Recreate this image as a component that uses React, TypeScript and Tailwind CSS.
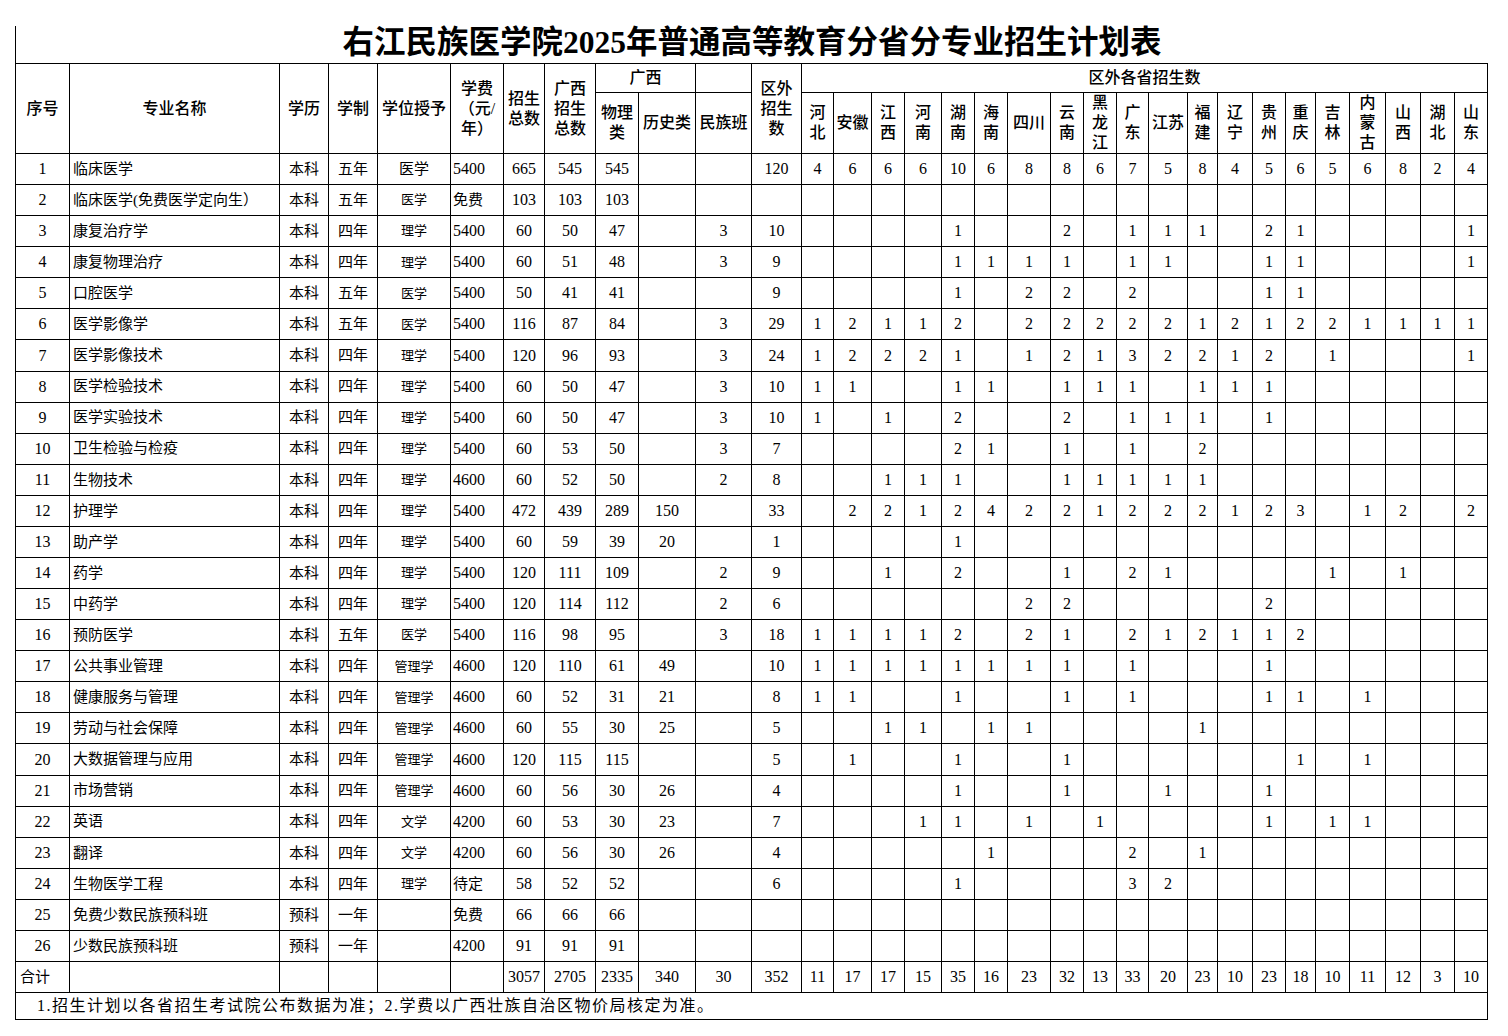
import React from "react";

const provinces = ["河北", "安徽", "江西", "河南", "湖南", "海南", "四川", "云南", "黑龙江", "广东", "江苏", "福建", "辽宁", "贵州", "重庆", "吉林", "内蒙古", "山西", "湖北", "山东"];

// header labels, stacked the way they wrap in the sheet
const provinceHead = [["河", "北"], ["安徽"], ["江", "西"], ["河", "南"], ["湖", "南"], ["海", "南"], ["四川"], ["云", "南"], ["黑", "龙", "江"], ["广", "东"], ["江苏"], ["福", "建"], ["辽", "宁"], ["贵", "州"], ["重", "庆"], ["吉", "林"], ["内", "蒙", "古"], ["山", "西"], ["湖", "北"], ["山", "东"]];

const provinceCols = ["w-[32px]", "w-[38px]", "w-[33px]", "w-[37px]", "w-[33px]", "w-[33px]", "w-[43px]", "w-[33px]", "w-[33px]", "w-[32px]", "w-[39px]", "w-[30px]", "w-[35px]", "w-[33px]", "w-[30px]", "w-[34px]", "w-[36px]", "w-[35px]", "w-[34px]", "w-[33px]"];

type Prov = Partial<Record<string, number>>;
// no, name, level, years, degree, fee, total, gx total, physics, history, minzu, outside, provinces
type Row = [string, string, string, string, string, string, string, string, string, string, string, string, Prov];

const rows: Row[] = [
    ["1", "临床医学", "本科", "五年", "医学", "5400", "665", "545", "545", "", "", "120", { 河北: 4, 安徽: 6, 江西: 6, 河南: 6, 湖南: 10, 海南: 6, 四川: 8, 云南: 8, 黑龙江: 6, 广东: 7, 江苏: 5, 福建: 8, 辽宁: 4, 贵州: 5, 重庆: 6, 吉林: 5, 内蒙古: 6, 山西: 8, 湖北: 2, 山东: 4 }],
    ["2", "临床医学(免费医学定向生）", "本科", "五年", "医学", "免费", "103", "103", "103", "", "", "", {}],
    ["3", "康复治疗学", "本科", "四年", "理学", "5400", "60", "50", "47", "", "3", "10", { 湖南: 1, 云南: 2, 广东: 1, 江苏: 1, 福建: 1, 贵州: 2, 重庆: 1, 山东: 1 }],
    ["4", "康复物理治疗", "本科", "四年", "理学", "5400", "60", "51", "48", "", "3", "9", { 湖南: 1, 海南: 1, 四川: 1, 云南: 1, 广东: 1, 江苏: 1, 贵州: 1, 重庆: 1, 山东: 1 }],
    ["5", "口腔医学", "本科", "五年", "医学", "5400", "50", "41", "41", "", "", "9", { 湖南: 1, 四川: 2, 云南: 2, 广东: 2, 贵州: 1, 重庆: 1 }],
    ["6", "医学影像学", "本科", "五年", "医学", "5400", "116", "87", "84", "", "3", "29", { 河北: 1, 安徽: 2, 江西: 1, 河南: 1, 湖南: 2, 四川: 2, 云南: 2, 黑龙江: 2, 广东: 2, 江苏: 2, 福建: 1, 辽宁: 2, 贵州: 1, 重庆: 2, 吉林: 2, 内蒙古: 1, 山西: 1, 湖北: 1, 山东: 1 }],
    ["7", "医学影像技术", "本科", "四年", "理学", "5400", "120", "96", "93", "", "3", "24", { 河北: 1, 安徽: 2, 江西: 2, 河南: 2, 湖南: 1, 四川: 1, 云南: 2, 黑龙江: 1, 广东: 3, 江苏: 2, 福建: 2, 辽宁: 1, 贵州: 2, 吉林: 1, 山东: 1 }],
    ["8", "医学检验技术", "本科", "四年", "理学", "5400", "60", "50", "47", "", "3", "10", { 河北: 1, 安徽: 1, 湖南: 1, 海南: 1, 云南: 1, 黑龙江: 1, 广东: 1, 福建: 1, 辽宁: 1, 贵州: 1 }],
    ["9", "医学实验技术", "本科", "四年", "理学", "5400", "60", "50", "47", "", "3", "10", { 河北: 1, 江西: 1, 湖南: 2, 云南: 2, 广东: 1, 江苏: 1, 福建: 1, 贵州: 1 }],
    ["10", "卫生检验与检疫", "本科", "四年", "理学", "5400", "60", "53", "50", "", "3", "7", { 湖南: 2, 海南: 1, 云南: 1, 广东: 1, 福建: 2 }],
    ["11", "生物技术", "本科", "四年", "理学", "4600", "60", "52", "50", "", "2", "8", { 江西: 1, 河南: 1, 湖南: 1, 云南: 1, 黑龙江: 1, 广东: 1, 江苏: 1, 福建: 1 }],
    ["12", "护理学", "本科", "四年", "理学", "5400", "472", "439", "289", "150", "", "33", { 安徽: 2, 江西: 2, 河南: 1, 湖南: 2, 海南: 4, 四川: 2, 云南: 2, 黑龙江: 1, 广东: 2, 江苏: 2, 福建: 2, 辽宁: 1, 贵州: 2, 重庆: 3, 内蒙古: 1, 山西: 2, 山东: 2 }],
    ["13", "助产学", "本科", "四年", "理学", "5400", "60", "59", "39", "20", "", "1", { 湖南: 1 }],
    ["14", "药学", "本科", "四年", "理学", "5400", "120", "111", "109", "", "2", "9", { 江西: 1, 湖南: 2, 云南: 1, 广东: 2, 江苏: 1, 吉林: 1, 山西: 1 }],
    ["15", "中药学", "本科", "四年", "理学", "5400", "120", "114", "112", "", "2", "6", { 四川: 2, 云南: 2, 贵州: 2 }],
    ["16", "预防医学", "本科", "五年", "医学", "5400", "116", "98", "95", "", "3", "18", { 河北: 1, 安徽: 1, 江西: 1, 河南: 1, 湖南: 2, 四川: 2, 云南: 1, 广东: 2, 江苏: 1, 福建: 2, 辽宁: 1, 贵州: 1, 重庆: 2 }],
    ["17", "公共事业管理", "本科", "四年", "管理学", "4600", "120", "110", "61", "49", "", "10", { 河北: 1, 安徽: 1, 江西: 1, 河南: 1, 湖南: 1, 海南: 1, 四川: 1, 云南: 1, 广东: 1, 贵州: 1 }],
    ["18", "健康服务与管理", "本科", "四年", "管理学", "4600", "60", "52", "31", "21", "", "8", { 河北: 1, 安徽: 1, 湖南: 1, 云南: 1, 广东: 1, 贵州: 1, 重庆: 1, 内蒙古: 1 }],
    ["19", "劳动与社会保障", "本科", "四年", "管理学", "4600", "60", "55", "30", "25", "", "5", { 江西: 1, 河南: 1, 海南: 1, 四川: 1, 福建: 1 }],
    ["20", "大数据管理与应用", "本科", "四年", "管理学", "4600", "120", "115", "115", "", "", "5", { 安徽: 1, 湖南: 1, 云南: 1, 重庆: 1, 内蒙古: 1 }],
    ["21", "市场营销", "本科", "四年", "管理学", "4600", "60", "56", "30", "26", "", "4", { 湖南: 1, 云南: 1, 江苏: 1, 贵州: 1 }],
    ["22", "英语", "本科", "四年", "文学", "4200", "60", "53", "30", "23", "", "7", { 河南: 1, 湖南: 1, 四川: 1, 黑龙江: 1, 贵州: 1, 吉林: 1, 内蒙古: 1 }],
    ["23", "翻译", "本科", "四年", "文学", "4200", "60", "56", "30", "26", "", "4", { 海南: 1, 广东: 2, 福建: 1 }],
    ["24", "生物医学工程", "本科", "四年", "理学", "待定", "58", "52", "52", "", "", "6", { 湖南: 1, 广东: 3, 江苏: 2 }],
    ["25", "免费少数民族预科班", "预科", "一年", "", "免费", "66", "66", "66", "", "", "", {}],
    ["26", "少数民族预科班", "预科", "一年", "", "4200", "91", "91", "91", "", "", "", {}],
];

const totals = ["3057", "2705", "2335", "340", "30", "352", "11", "17", "17", "15", "35", "16", "23", "32", "13", "33", "20", "23", "10", "23", "18", "10", "11", "12", "3", "10"];

const cell = "border border-black p-0 text-center align-middle";
const num = cell + " text-[16px]";
const txt = cell + " text-[15px]";
const head = "border border-black p-0 text-center align-middle text-[16px] font-medium leading-[20px]";

export default function App() {
    return (
        <div className="min-h-screen bg-white text-black font-['Liberation_Serif','Noto_Sans_CJK_SC',serif]">
            <div className="ml-[15px] pt-[26px] w-[1473px]">
                <div className="h-[37px] pb-[3px] border-l border-black flex items-center justify-center text-[31.5px] font-bold leading-none">
                    右江民族医学院2025年普通高等教育分省分专业招生计划表
                </div>
                <table className="w-[1473px] table-fixed border-collapse">
                    <colgroup>
                        <col className="w-[54px]" />
                        <col className="w-[210px]" />
                        <col className="w-[49px]" />
                        <col className="w-[49px]" />
                        <col className="w-[73px]" />
                        <col className="w-[53px]" />
                        <col className="w-[41px]" />
                        <col className="w-[51px]" />
                        <col className="w-[43px]" />
                        <col className="w-[57px]" />
                        <col className="w-[56px]" />
                        <col className="w-[50px]" />
                        {provinceCols.map((w, i) => (
                            <col key={i} className={w} />
                        ))}
                    </colgroup>
                    <thead>
                        <tr className="h-[29px]">
                            <th rowSpan={2} className={head}>序号</th>
                            <th rowSpan={2} className={head}>专业名称</th>
                            <th rowSpan={2} className={head}>学历</th>
                            <th rowSpan={2} className={head}>学制</th>
                            <th rowSpan={2} className={head}>学位授予</th>
                            <th rowSpan={2} className={head}>学费<br />（元/<br />年）</th>
                            <th rowSpan={2} className={head}>招生<br />总数</th>
                            <th rowSpan={2} className={head}>广西<br />招生<br />总数</th>
                            <th colSpan={2} className={head}>广西</th>
                            <th className={head}></th>
                            <th rowSpan={2} className={head}>区外<br />招生<br />数</th>
                            <th colSpan={20} className={head}>区外各省招生数</th>
                        </tr>
                        <tr className="h-[60px]">
                            <th className={head}>物理<br />类</th>
                            <th className={head}>历史类</th>
                            <th className={head}>民族班</th>
                            {provinceHead.map((lines, i) => (
                                <th key={i} className={head + " whitespace-nowrap"}>
                                    {lines.map((l, j) => (
                                        <div key={j}>{l}</div>
                                    ))}
                                </th>
                            ))}
                        </tr>
                    </thead>
                    <tbody>
                        {rows.map((r, i) => (
                            <tr key={i} className="h-[31.08px]">
                                <td className={num}>{r[0]}</td>
                                <td className={txt + " text-left pl-[3px] whitespace-nowrap"}>{r[1]}</td>
                                <td className={txt}>{r[2]}</td>
                                <td className={txt}>{r[3]}</td>
                                <td className={cell + (i === 0 ? " text-[15px]" : " text-[13px]")}>{r[4]}</td>
                                <td className={(/\d/.test(r[5]) ? num : txt) + " text-left pl-[2px]"}>{r[5]}</td>
                                <td className={num}>{r[6]}</td>
                                <td className={num}>{r[7]}</td>
                                <td className={num}>{r[8]}</td>
                                <td className={num}>{r[9]}</td>
                                <td className={num}>{r[10]}</td>
                                <td className={num}>{r[11]}</td>
                                {provinces.map((p) => (
                                    <td key={p} className={num}>{r[12][p] ?? ""}</td>
                                ))}
                            </tr>
                        ))}
                        <tr className="h-[31px]">
                            <td className={txt + " text-left pl-[4px]"}>合计</td>
                            <td className={cell}></td>
                            <td className={cell}></td>
                            <td className={cell}></td>
                            <td className={cell}></td>
                            <td className={cell}></td>
                            {totals.map((t, i) => (
                                <td key={i} className={num}>{t}</td>
                            ))}
                        </tr>
                        <tr className="h-[27px]">
                            <td colSpan={32} className="border border-black p-0 pl-[21px] text-left align-middle text-[16px] tracking-[1.5px] whitespace-nowrap">
                                1.招生计划以各省招生考试院公布数据为准；2.学费以广西壮族自治区物价局核定为准。
                            </td>
                        </tr>
                    </tbody>
                </table>
            </div>
        </div>
    );
}
